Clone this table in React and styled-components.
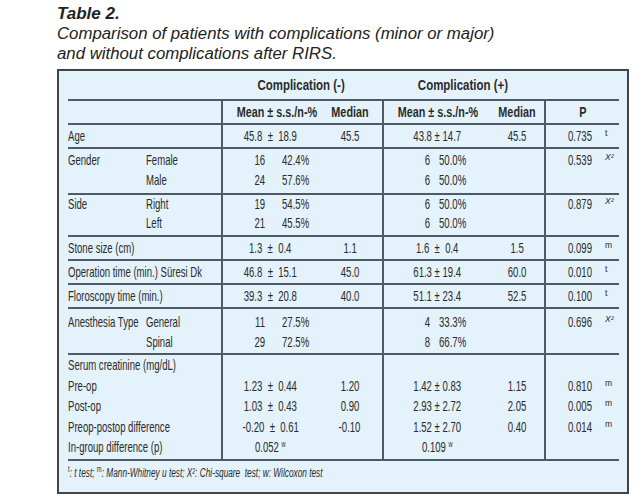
import React from 'react';
import styled, { createGlobalStyle } from 'styled-components';

const GlobalStyle = createGlobalStyle`
  html, body {
    margin: 0;
    padding: 0;
    background: #ffffff;
  }
`;

const LINE = '#4f5a63';
const COLS = '153px 97px 64px 108px 54px 75px';

const Page = styled.div`
  width: 643px;
  height: 502px;
  padding: 4px 0 0 57px;
  box-sizing: border-box;
  color: #222;
`;

const Title = styled.div`
  font-family: "Liberation Sans", Arial, sans-serif;
  font-weight: bold;
  font-style: italic;
  font-size: 17px;
  line-height: 20px;
`;

const Caption = styled.div`
  font-family: "Liberation Sans", Arial, sans-serif;
  font-style: italic;
  font-size: 16.8px;
  line-height: 20px;
  margin-bottom: 5px;
`;

const Box = styled.div`
  width: 572px;
  height: 425px;
  box-sizing: border-box;
  border: 2px solid #3f454a;
  background: #e3f2fb;
  padding: 0 8px 0 9px;
  font-family: "Liberation Sans", Arial, sans-serif;
  font-size: 14.5px;
  color: #2b2b2b;
`;

// the print face is a condensed grotesque; squeeze a regular face to match
const Cond = styled.span`
  display: inline-block;
  white-space: pre;
  transform: scaleX(${(p) => p.$sx || 0.66});
  transform-origin: ${(p) => p.$o || 'center'};
`;

const Row = styled.div`
  display: grid;
  grid-template-columns: ${(p) => p.$cols || COLS};
  height: ${(p) => p.$h}px;
  box-sizing: border-box;
  border-bottom: 2px solid ${LINE};
`;

const Cell = styled.div`
  box-sizing: border-box;
  border-left: ${(p) => (p.$divider ? `2px solid ${LINE}` : 'none')};
  padding-top: ${(p) => p.$pt || 0}px;
  text-align: ${(p) => p.$align || 'center'};
  padding-left: ${(p) => p.$pl || 0}px;
  font-weight: ${(p) => (p.$bold ? 'bold' : 'normal')};
`;

const Line = styled.div`
  height: ${(p) => p.$lh}px;
  line-height: ${(p) => p.$lh}px;
  white-space: nowrap;
`;

const GroupHead = styled.div`
  font-weight: bold;
  text-align: center;
  line-height: 28px;
  font-size: 15px;
`;

const LabelLine = styled.div`
  display: grid;
  grid-template-columns: 78px auto;
  height: ${(p) => p.$lh}px;
  line-height: ${(p) => p.$lh}px;
  white-space: nowrap;
`;

const Pair = styled.div`
  display: grid;
  grid-template-columns: ${(p) => p.$w}px auto;
  column-gap: ${(p) => p.$gap}px;
  height: ${(p) => p.$lh}px;
  line-height: ${(p) => p.$lh}px;
  text-align: left;
  & > span:first-child {
    text-align: right;
  }
`;

const PValue = styled.div`
  height: ${(p) => p.$lh}px;
  line-height: ${(p) => p.$lh}px;
  white-space: nowrap;
`;

const PNum = styled.span`
  display: inline-block;
  width: 37px;
`;

const Sup = styled.sup`
  font-size: 8.5px;
  line-height: 0;
  vertical-align: 5px;
  font-style: ${(p) => (p.$italic ? 'italic' : 'normal')};
`;

const Footnote = styled.div`
  padding-top: 4px;
  font-style: italic;
  font-size: 12px;
  line-height: 16px;
  white-space: nowrap;
`;

const pairs = {
  left: { w: 42, gap: 17 },
  right: { w: 46, gap: 9 },
};

function Pairs({ side, items, lh }) {
  const cfg = pairs[side];
  return items.map(([n, pct]) => (
    <Pair key={n + pct} $w={cfg.w} $gap={cfg.gap} $lh={lh}>
      <span><Cond $o="right">{n}</Cond></span>
      <span><Cond $o="left">{pct}</Cond></span>
    </Pair>
  ));
}

function P({ value, sup, italic, lh }) {
  return (
    <PValue $lh={lh}>
      <PNum><Cond $o="left">{value}</Cond></PNum>
      {sup && <Sup $italic={italic}>{sup}</Sup>}
    </PValue>
  );
}

function SimpleRow({ label, m1, med1, m2, med2, p, sup, italic }) {
  return (
    <Row $h={24}>
      <Cell $align="left"><Line $lh={22}><Cond $o="left">{label}</Cond></Line></Cell>
      <Cell $divider><Line $lh={22}><Cond>{m1}</Cond></Line></Cell>
      <Cell><Line $lh={22}><Cond>{med1}</Cond></Line></Cell>
      <Cell $divider><Line $lh={22}><Cond>{m2}</Cond></Line></Cell>
      <Cell><Line $lh={22}><Cond>{med2}</Cond></Line></Cell>
      <Cell $divider $align="left" $pl={22}><P value={p} sup={sup} italic={italic} lh={22} /></Cell>
    </Row>
  );
}

function GroupRow({ h, pt, lh, label, subs, left, right, p }) {
  return (
    <Row $h={h}>
      <Cell $align="left" $pt={pt}>
        {subs.map((s, i) => (
          <LabelLine key={s} $lh={lh}>
            <span><Cond $o="left">{i === 0 ? label : ''}</Cond></span>
            <span><Cond $o="left">{s}</Cond></span>
          </LabelLine>
        ))}
      </Cell>
      <Cell $divider $pt={pt}><Pairs side="left" items={left} lh={lh} /></Cell>
      <Cell />
      <Cell $divider $pt={pt}><Pairs side="right" items={right} lh={lh} /></Cell>
      <Cell />
      <Cell $divider $align="left" $pl={22} $pt={pt}>
        <P value={p} sup="X²" italic lh={lh} />
      </Cell>
    </Row>
  );
}

const serum = [
  ['Pre-op', '1.23  ±  0.44', '1.20', '1.42 ± 0.83', '1.15', '0.810'],
  ['Post-op', '1.03  ±  0.43', '0.90', '2.93 ± 2.72', '2.05', '0.005'],
  ['Preop-postop difference', '-0.20  ±  0.61', '-0.10', '1.52 ± 2.70', '0.40', '0.014'],
];

export default function App() {
  const SL = 20.5;
  return (
    <Page>
      <GlobalStyle />
      <Title>Table 2.</Title>
      <Caption>
        Comparison of patients with complications (minor or major)
        <br />
        and without complications after RIRS.
      </Caption>
      <Box>
        <Row $h={30} $cols="153px 161px 162px 75px">
          <div />
          <GroupHead><Cond $sx={0.765}>Complication (-)</Cond></GroupHead>
          <GroupHead><Cond $sx={0.765}>Complication (+)</Cond></GroupHead>
          <div />
        </Row>
        <Row $h={24}>
          <Cell />
          <Cell $divider $bold><Line $lh={22}><Cond $sx={0.745}>Mean ± s.s./n-%</Cond></Line></Cell>
          <Cell $bold><Line $lh={22}><Cond $sx={0.745}>Median</Cond></Line></Cell>
          <Cell $divider $bold><Line $lh={22}><Cond $sx={0.745}>Mean ± s.s./n-%</Cond></Line></Cell>
          <Cell $bold><Line $lh={22}><Cond $sx={0.745}>Median</Cond></Line></Cell>
          <Cell $divider $bold><Line $lh={22}><Cond $sx={0.745}>P</Cond></Line></Cell>
        </Row>
        <SimpleRow label="Age" m1="45.8  ±  18.9" med1="45.5" m2="43.8 ± 14.7" med2="45.5" p="0.735" sup="t" />
        <GroupRow
          h={46} pt={1} lh={20} label="Gender" subs={['Female', 'Male']}
          left={[['16', '42.4%'], ['24', '57.6%']]}
          right={[['6', '50.0%'], ['6', '50.0%']]}
          p="0.539"
        />
        <GroupRow
          h={42} pt={0} lh={19} label="Side" subs={['Right', 'Left']}
          left={[['19', '54.5%'], ['21', '45.5%']]}
          right={[['6', '50.0%'], ['6', '50.0%']]}
          p="0.879"
        />
        <SimpleRow label="Stone size (cm)" m1="1.3  ±  0.4" med1="1.1" m2="1.6  ±  0.4" med2="1.5" p="0.099" sup="m" />
        <SimpleRow label="Operation time (min.) Süresi Dk" m1="46.8  ±  15.1" med1="45.0" m2="61.3 ± 19.4" med2="60.0" p="0.010" sup="t" />
        <SimpleRow label="Floroscopy time (min.)" m1="39.3  ±  20.8" med1="40.0" m2="51.1 ± 23.4" med2="52.5" p="0.100" sup="t" />
        <GroupRow
          h={46} pt={3} lh={20} label="Anesthesia Type" subs={['General', 'Spinal']}
          left={[['11', '27.5%'], ['29', '72.5%']]}
          right={[['4', '33.3%'], ['8', '66.7%']]}
          p="0.696"
        />
        <Row $h={106}>
          <Cell $align="left">
            <Line $lh={SL}><Cond $o="left">Serum creatinine (mg/dL)</Cond></Line>
            {serum.map((r) => <Line key={r[0]} $lh={SL}><Cond $o="left">{r[0]}</Cond></Line>)}
            <Line $lh={SL}><Cond $o="left">In-group difference (p)</Cond></Line>
          </Cell>
          <Cell $divider>
            <Line $lh={SL} />
            {serum.map((r) => <Line key={r[0]} $lh={SL}><Cond>{r[1]}</Cond></Line>)}
            <Line $lh={SL}><Cond>0.052 <Sup>w</Sup></Cond></Line>
          </Cell>
          <Cell>
            <Line $lh={SL} />
            {serum.map((r) => <Line key={r[0]} $lh={SL}><Cond>{r[2]}</Cond></Line>)}
          </Cell>
          <Cell $divider>
            <Line $lh={SL} />
            {serum.map((r) => <Line key={r[0]} $lh={SL}><Cond>{r[3]}</Cond></Line>)}
            <Line $lh={SL}><Cond>0.109 <Sup>w</Sup></Cond></Line>
          </Cell>
          <Cell>
            <Line $lh={SL} />
            {serum.map((r) => <Line key={r[0]} $lh={SL}><Cond>{r[4]}</Cond></Line>)}
          </Cell>
          <Cell $divider $align="left" $pl={22}>
            <Line $lh={SL} />
            {serum.map((r) => <P key={r[0]} value={r[5]} sup="m" lh={SL} />)}
          </Cell>
        </Row>
        <Footnote>
          <Cond $o="left" $sx={0.69}>
            <Sup>t</Sup>: t test; <Sup>m</Sup>: Mann-Whitney u test; X²: Chi-square  test; w: Wilcoxon test
          </Cond>
        </Footnote>
      </Box>
    </Page>
  );
}
